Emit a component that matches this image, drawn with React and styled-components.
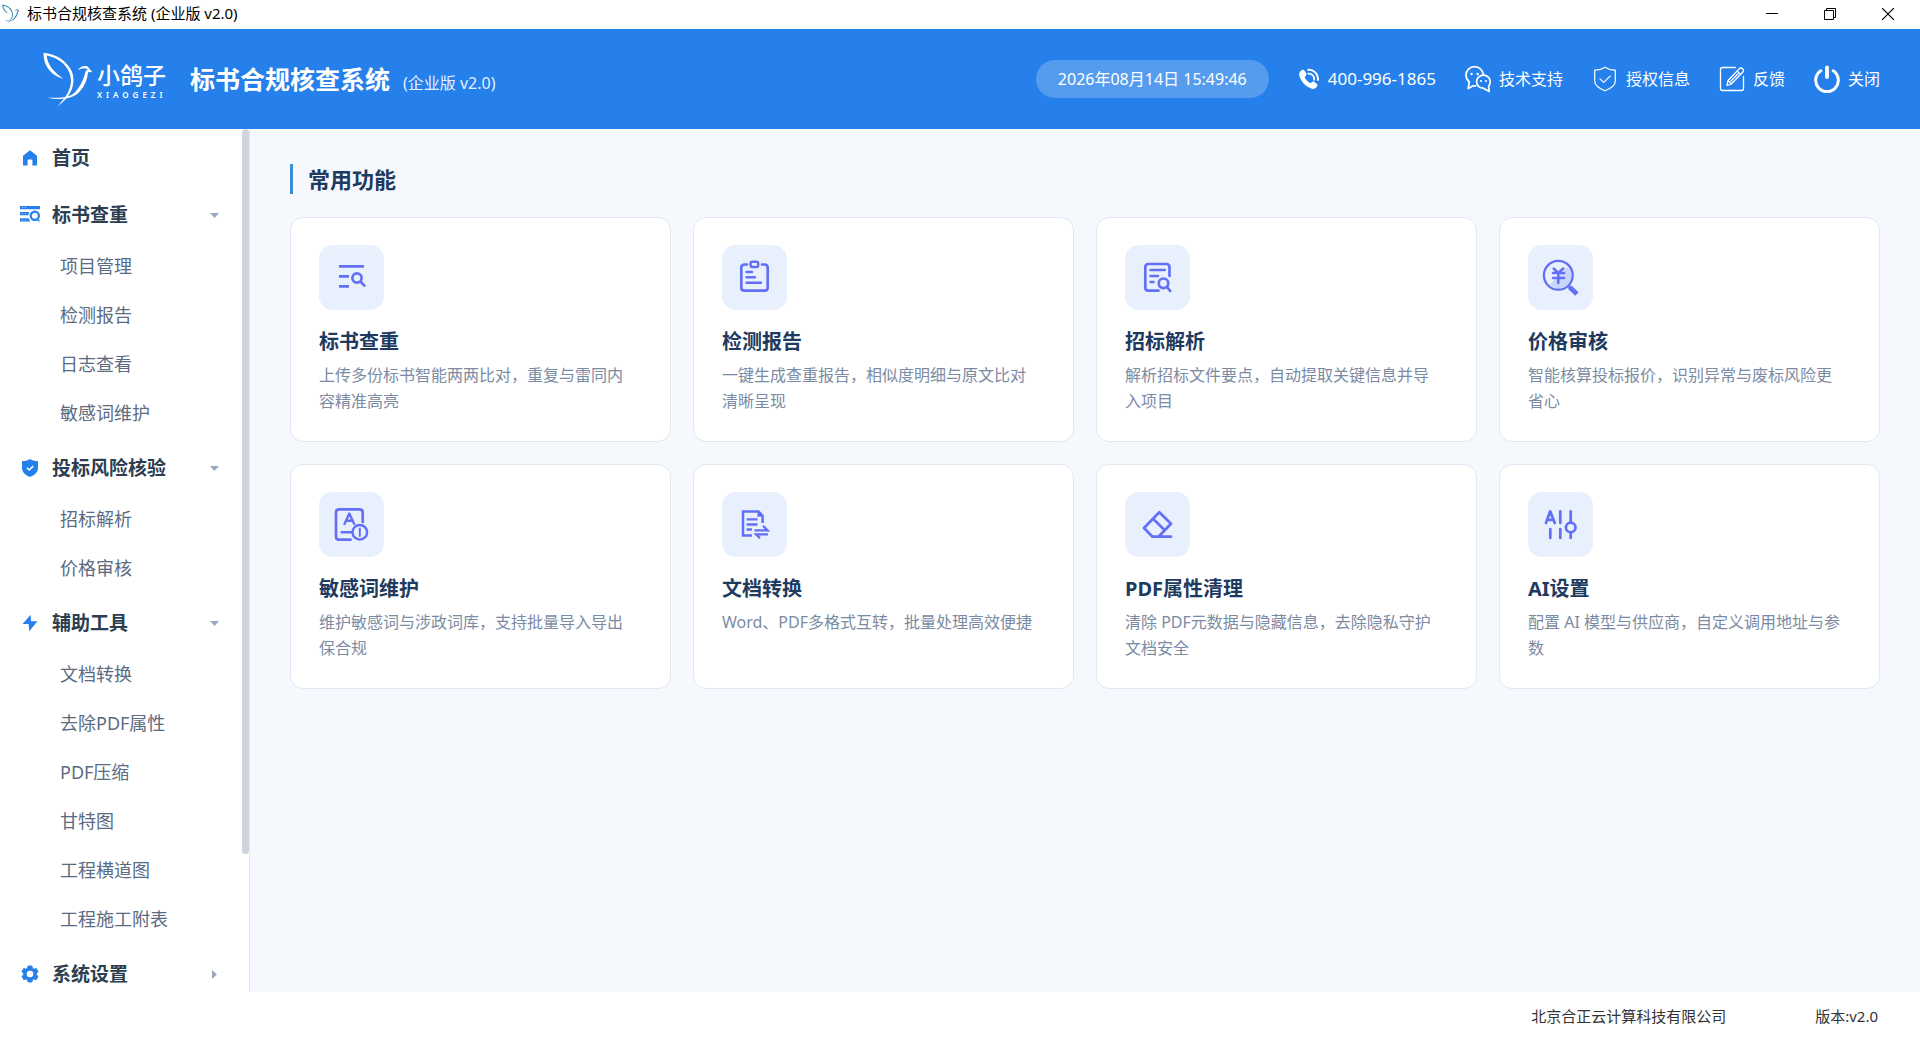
import { useState } from "react";
import styled, { createGlobalStyle } from "styled-components";

const GlobalStyle = createGlobalStyle`
    * {
        box-sizing: border-box;
    }
    body {
        margin: 0;
        background: #fff;
        font-family: "Noto Sans", "Noto Sans CJK SC", sans-serif;
        font-size: 16px;
    }
    button {
        margin: 0;
        padding: 0;
        border: none;
        background: none;
        font: inherit;
        color: inherit;
        cursor: pointer;
    }
    a {
        color: inherit;
        text-decoration: none;
    }
    svg {
        display: block;
        flex: none;
    }
`;

const Window = styled.div`
    display: flex;
    flex-direction: column;
    height: 100vh;
`;

/* ---------- title bar ---------- */

const TitleBar = styled.div`
    display: flex;
    align-items: center;
    height: 29px;
    flex: none;
    padding: 0 3px 2px 2px;
    background: #fff;
    color: #000;
`;

const WindowTitle = styled.span`
    flex: 1;
    margin-left: 7px;
    font-size: 15px;
    line-height: 27px;
`;

const WindowButton = styled.button`
    display: flex;
    align-items: center;
    justify-content: center;
    width: 58px;
    height: 27px;
`;

/* ---------- header ---------- */

const Header = styled.header`
    display: flex;
    align-items: center;
    justify-content: space-between;
    height: 100px;
    flex: none;
    padding: 0 40px 0 43px;
    background: #2680eb;
    color: #fff;
`;

const Brand = styled.div`
    display: flex;
    align-items: center;
`;

const LogoText = styled.div`
    display: flex;
    flex-direction: column;
    width: 72px;
    margin: 4px 21px 0 4px;
    white-space: nowrap;
`;

const LogoName = styled.span`
    font-size: 23px;
    font-weight: 500;
    line-height: 28px;
`;

const LogoLatin = styled.span`
    font-size: 8px;
    font-weight: 600;
    line-height: 12px;
    letter-spacing: 4px;
`;

const AppTitle = styled.h1`
    display: flex;
    align-items: baseline;
    margin: 0;
    padding-top: 4px;
    font-size: 25px;
    font-weight: 700;
    line-height: 36px;
`;

const Edition = styled.span`
    margin-left: 13px;
    font-size: 16px;
    font-weight: 400;
    color: rgba(255, 255, 255, 0.9);
`;

const Tools = styled.div`
    display: flex;
    align-items: center;
    gap: 29px;
`;

const Clock = styled.time`
    padding: 0 22px;
    border-radius: 19px;
    background: rgba(255, 255, 255, 0.22);
    line-height: 38px;
`;

const Tool = styled.button`
    display: flex;
    align-items: center;
    gap: 8px;
    line-height: 26px;
`;

const Phone = styled.span`
    font-size: 17px;
`;

/* ---------- sidebar ---------- */

const Body = styled.div`
    display: flex;
    flex: 1;
    min-height: 0;
`;

const Sidebar = styled.aside`
    display: flex;
    width: 250px;
    flex: none;
    border-right: 1px solid #e1e8f5;
    background: #fff;
`;

const Nav = styled.nav`
    display: flex;
    flex-direction: column;
    gap: 3px;
    flex: 1;
    padding: 2px 0 26px;
    overflow-y: auto;
    scrollbar-width: none;
`;

const Thumb = styled.div`
    width: 7px;
    height: 84%;
    border-radius: 4px;
    background: #cfd4de;
`;

const Group = styled.section`
    flex: none;
`;

const GroupButton = styled.button`
    display: flex;
    align-items: center;
    gap: 12px;
    width: 100%;
    height: 54px;
    padding: 0 21px 0 20px;
    color: #2c3e50;
    font-size: 19px;
    font-weight: 700;
    line-height: 28px;
`;

const GroupLabel = styled.span`
    flex: 1;
    text-align: left;
`;

const SubList = styled.ul`
    margin: 0;
    padding: 0;
    list-style: none;
`;

const SubLink = styled.a`
    display: block;
    padding-left: 60px;
    color: #5a6b82;
    font-size: 18px;
    line-height: 49px;
`;

/* ---------- content ---------- */

const Main = styled.main`
    flex: 1;
    padding: 35px 40px;
    background: #f5f9fe;
    overflow: auto;
`;

const SectionTitle = styled.h2`
    margin: 0 0 23px;
    padding-left: 15px;
    border-left: 3px solid #3b8fd6;
    color: #1e3a5f;
    font-size: 22px;
    font-weight: 700;
    line-height: 30px;
`;

const Cards = styled.div`
    display: grid;
    grid-template-columns: repeat(4, 1fr);
    gap: 22px;
`;

const Card = styled.a`
    padding: 27px 33px 27px 28px;
    border: 1px solid #e1e8f1;
    border-radius: 13px;
    background: #fff;
`;

const CardIcon = styled.div`
    width: 65px;
    height: 65px;
    border-radius: 14px;
    background: #e8f0fe;
    color: #6370f6;
`;

const CardTitle = styled.h3`
    margin: 18px 0 6px;
    color: #1e3a5f;
    font-size: 20px;
    font-weight: 700;
    line-height: 28px;
`;

const CardText = styled.p`
    margin: 0;
    color: #7b8ba3;
    font-size: 16px;
    line-height: 26px;
`;

const Footer = styled.footer`
    display: flex;
    align-items: center;
    justify-content: flex-end;
    gap: 89px;
    height: 49px;
    flex: none;
    padding: 0 42px 2px;
    background: #fff;
    color: #333;
    font-size: 15px;
    line-height: 20px;
`;

/* ---------- drawings ---------- */

const Bird = ({ width, height, color }) => (
    <svg width={width} height={height} viewBox="130 152 152 171" fill={color} aria-hidden="true">
        <path d="M131 157C170 160 206 183 219 218C227 243 222 269 205 292C197 302 188 311 175 321C186 306 197 296 204 282C217 258 218 240 210 218C199 191 173 172 141 166C143 194 162 216 192 237C157 227 131 201 131 157Z" />
        <path d="M236 211C243 199 256 195 266 199L280 216L267 217C266 241 252 270 232 285C210 300 175 302 143 295C172 295 205 297 224 281C241 266 253 241 258 220C259 212 263 210 267 209C259 202 249 203 236 211Z" />
    </svg>
);

const PhoneIcon = () => (
    <svg width="22" height="22" viewBox="0 0 22 22" fill="#fff">
        <path d="M3.6 2.2C4.6 1.4 5.9 1.6 6.6 2.7L8.2 5.3C8.7 6.2 8.5 7.1 7.8 7.8L6.6 9C7.5 11.6 9.6 13.8 12.4 15.2L13.7 14.2C14.5 13.5 15.4 13.4 16.3 14L18.6 15.6C19.6 16.4 19.8 17.6 19 18.6C17.7 20.5 15.6 21.4 13.2 20.6C7.5 18.7 2.3 12.8 1.2 7.1C.8 5 1.8 3.3 3.6 2.2Z" />
        <path d="M10 1.8C15.5 1.2 20.3 5.7 20 12M10.2 5.6C13.7 5.4 16.4 8 16.2 11.8" fill="none" stroke="#fff" strokeWidth="1.8" strokeLinecap="round" />
    </svg>
);

const WechatIcon = () => (
    <svg width="26" height="28" viewBox="0 0 26 28" fill="none" stroke="#fff" strokeWidth="1.7" strokeLinejoin="round">
        <path d="M18.6 9.8C18 5.3 14.3 1.6 9.6 1.6C4.8 1.6 1 5.4 1 10.1C1 13 2.3 15.4 4.2 17L3.2 23.6L8.2 20.8L11.3 21" />
        <path d="M18.5 10.2C14.5 10.2 11.6 13 11.6 16.7C11.6 20.5 14.5 23.2 18.4 23.2L24.2 26.4L23.6 21.4C24.6 20 25.2 18.5 25.2 16.7C25.2 13 22.3 10.2 18.5 10.2Z" />
        <g fill="#fff" stroke="none">
            <circle cx="6.5" cy="9" r="1.2" />
            <circle cx="12.6" cy="9" r="1.2" />
            <circle cx="16" cy="16" r="1.1" />
            <circle cx="21" cy="16" r="1.1" />
        </g>
    </svg>
);

const LicenseIcon = () => (
    <svg width="26" height="26" viewBox="0 0 26 26" fill="none" stroke="#fff" strokeWidth="1.2" strokeLinejoin="round">
        <path d="M13 1.2C16 3.2 19.5 4.3 23.3 4.2V15C23.3 19.5 19 22.4 13 24.8C7 22.4 2.7 19.5 2.7 15V4.2C6.5 4.3 10 3.2 13 1.2Z" />
        <path d="M7.6 12.6L11.7 16.4L18.6 9.6" />
    </svg>
);

const FeedbackIcon = () => (
    <svg width="26" height="26" viewBox="0 0 26 26" fill="none" stroke="#fff" strokeWidth="1.3" strokeLinejoin="round" strokeLinecap="round">
        <path d="M16.5 1.5H3.5C2.2 1.5 1.5 2.2 1.5 3.5V22.5C1.5 23.8 2.2 24.5 3.5 24.5H22.5C23.8 24.5 24.5 23.8 24.5 22.5V10.5" />
        <path d="M8 19.5L9 14.5L20.4 2.6C22.5 .8 25.6 3.8 23.9 6L12.5 17.8L8 19.5ZM9.2 14.6L12.4 17.7M18 5L21.6 8.4M12 15L19 7.8" />
    </svg>
);

const PowerIcon = () => (
    <svg width="26" height="28" viewBox="0 0 26 28" fill="none" stroke="#fff">
        <path d="M6.8 5.8A11.3 11.3 0 1 0 19.2 5.8" strokeWidth="3" strokeLinecap="round" />
        <path d="M13 2.3V12" strokeWidth="3.8" strokeLinecap="round" />
    </svg>
);

const NavIcon = ({ children }) => (
    <svg width="20" height="20" viewBox="0 0 20 20" fill="#2680eb" aria-hidden="true">
        {children}
    </svg>
);

const homeIcon = <path d="M10 2.2L17 7.8V17.5H12.4V12.2C12.4 11.7 12 11.4 11.6 11.4H8.4C8 11.4 7.6 11.7 7.6 12.2V17.5H3V7.8Z" />;

const checkIcon = (
    <>
        <path d="M0 1H20V4.2H0ZM0 7H9.6A6 6 0 0 0 8.3 10.2H0ZM0 13.3H8.7A6 6 0 0 0 10.5 16.5H0Z" />
        <path d="M2 2.1H3V3.1H2ZM5 2.1H6V3.1H5ZM2 8.1H3V9.1H2ZM5 8.1H6V9.1H5ZM2 14.4H3V15.4H2ZM5 14.4H6V15.4H5Z" fill="#fff" fillOpacity="0.7" />
        <circle cx="14.8" cy="10.8" r="4.1" fill="none" stroke="#2680eb" strokeWidth="2.2" />
        <path d="M16.2 14.4H19.4V17.3Z" />
    </>
);

const riskIcon = (
    <>
        <path d="M10 1C12.7 2.6 15.2 3.2 18 3.2V10C18 14.3 14.5 17.2 10 19C5.5 17.2 2 14.3 2 10V3.2C4.8 3.2 7.3 2.6 10 1Z" />
        <path d="M7 9.8L9.3 12L13.2 8.1" fill="none" stroke="#fff" strokeWidth="1.5" />
    </>
);

const boltIcon = <path d="M10.6 1.8L2.6 11H8.6L9.3 18.2L17.4 8.2H11Z" />;

const gearIcon = (
    <>
        <path
            d="M8.2 2H11.8L12.4 4.3L14 5.2L16.3 4.6L18 7.7L16.4 9.3V10.9L18 12.4L16.3 15.5L14 14.9L12.4 15.8L11.8 18H8.2L7.6 15.8L6 14.9L3.7 15.5L2 12.4L3.6 10.9V9.3L2 7.7L3.7 4.6L6 5.2L7.6 4.3Z"
            stroke="#2680eb"
            strokeLinejoin="round"
        />
        <circle cx="10" cy="10" r="3.3" fill="#fff" />
    </>
);

const Caret = ({ open }) => (
    <svg width="13" height="13" viewBox="0 0 13 13" fill="#9aa8bd" aria-hidden="true">
        <path d={open ? "M2 4H11L6.5 9Z" : "M4 2V11L9 6.5Z"} />
    </svg>
);

const FeatureIcon = ({ children }) => (
    <svg width="65" height="65" viewBox="0 0 65 65" fill="none" stroke="currentColor" strokeWidth="2.7" strokeLinecap="round" strokeLinejoin="round" aria-hidden="true">
        {children}
    </svg>
);

const compareDrawing = (
    <g strokeLinecap="butt">
        <path d="M20 21.3H45M20 31.3H30M20 41.3H30M41.5 36.5L46 41.3" />
        <circle cx="38" cy="33" r="4.6" />
    </g>
);

const reportDrawing = (
    <>
        <path d="M25 19.5H22.5Q19.3 19.5 19.3 22.7V42.5Q19.3 45.7 22.5 45.7H42.5Q45.7 45.7 45.7 42.5V22.7Q45.7 19.5 42.5 19.5H40" />
        <rect x="28.6" y="16.8" width="7.6" height="5.2" rx="1.5" strokeWidth="2.4" />
        <path d="M24.5 27H30M24.5 32.3H33M24.5 37.7H39" strokeWidth="2.4" />
    </>
);

const parseDrawing = (
    <>
        <path d="M44.5 31V22.2Q44.5 19 41.3 19H23.5Q20.3 19 20.3 22.2V42.5Q20.3 45.7 23.5 45.7H33.5" />
        <path d="M25.5 25H39.8M25.5 31H33M25.5 37H28.5" strokeWidth="2.5" />
        <circle cx="38.5" cy="38.3" r="4.8" />
        <path d="M42 42L45.2 46" />
    </>
);

const priceDrawing = (
    <>
        <path d="M39.5 22A11.8 11.8 0 1 1 22 39.5Z" fill="#c9d4fb" stroke="none" />
        <circle cx="30.3" cy="30.3" r="14.4" strokeWidth="2.3" />
        <path d="M25.6 23.5L30.3 28L35.3 23.5M30.3 28V38M25 28H36M25 33H36" strokeWidth="2.5" />
        <path d="M40.5 41L43 43.3" />
        <path d="M43.4 43.8L47.2 47.3" strokeWidth="4.8" strokeLinecap="square" />
    </>
);

const wordsDrawing = (
    <>
        <path d="M43.7 30V20.5Q43.7 17.3 40.5 17.3H20.2Q17 17.3 17 20.5V44.5Q17 47.7 20.2 47.7H31.5" />
        <path d="M25.5 32L30.3 21.5L35.2 32M27.3 28.7H33.3M22.5 40.3H32" strokeWidth="2.4" />
        <circle cx="40.8" cy="40.3" r="7.3" strokeWidth="2.4" />
        <path d="M40.8 36.5V44" strokeWidth="2" />
    </>
);

const convertDrawing = (
    <g strokeLinecap="butt" strokeLinejoin="miter">
        <path d="M30 43.5H21V19.5H36.5L40.6 23.8V31" strokeWidth="2.5" />
        <path d="M35.5 18.5V24.8H41.5Z" fill="currentColor" stroke="none" />
        <path d="M24.6 27.3H35.5M24.6 32.5H35.5M24.6 37.5H30M32.5 38.3H45.5L41 33.8M46 42.3H34L38 46.3" strokeWidth="2.3" />
    </g>
);

const eraserDrawing = (
    <path d="M34.3 20.3L46 31.7L33.5 44.7H27.5L19 36ZM28.3 27L39.8 38.3M33.5 44.7H46" />
);

const aiDrawing = (
    <>
        <path d="M18 31L22.2 19.3L26.8 31M19.5 27.8H25M32.3 19.3V31M42.7 19.3V30M22.3 37V46M32.3 37V46M42.7 41V46" />
        <circle cx="42.7" cy="35.5" r="4.8" />
    </>
);

/* ---------- data ---------- */

const groups = [
    { label: "首页", icon: homeIcon },
    { label: "标书查重", icon: checkIcon, open: true, items: ["项目管理", "检测报告", "日志查看", "敏感词维护"] },
    { label: "投标风险核验", icon: riskIcon, open: true, items: ["招标解析", "价格审核"] },
    {
        label: "辅助工具",
        icon: boltIcon,
        open: true,
        items: ["文档转换", "去除PDF属性", "PDF压缩", "甘特图", "工程横道图", "工程施工附表"],
    },
    { label: "系统设置", icon: gearIcon, items: [] },
];

const features = [
    { title: "标书查重", text: "上传多份标书智能两两比对，重复与雷同内容精准高亮", drawing: compareDrawing },
    { title: "检测报告", text: "一键生成查重报告，相似度明细与原文比对清晰呈现", drawing: reportDrawing },
    { title: "招标解析", text: "解析招标文件要点，自动提取关键信息并导入项目", drawing: parseDrawing },
    { title: "价格审核", text: "智能核算投标报价，识别异常与废标风险更省心", drawing: priceDrawing },
    { title: "敏感词维护", text: "维护敏感词与涉政词库，支持批量导入导出保合规", drawing: wordsDrawing },
    { title: "文档转换", text: "Word、PDF多格式互转，批量处理高效便捷", drawing: convertDrawing },
    { title: "PDF属性清理", text: "清除 PDF元数据与隐藏信息，去除隐私守护文档安全", drawing: eraserDrawing },
    { title: "AI设置", text: "配置 AI 模型与供应商，自定义调用地址与参数", drawing: aiDrawing },
];

const NavGroup = ({ label, icon, items, open: initiallyOpen }) => {
    const [open, setOpen] = useState(Boolean(initiallyOpen));

    return (
        <Group>
            <GroupButton type="button" aria-expanded={items ? open : undefined} onClick={() => setOpen(!open)}>
                <NavIcon>{icon}</NavIcon>
                <GroupLabel>{label}</GroupLabel>
                {items && <Caret open={open} />}
            </GroupButton>
            {open && items && (
                <SubList>
                    {items.map((item) => (
                        <li key={item}>
                            <SubLink href="#">{item}</SubLink>
                        </li>
                    ))}
                </SubList>
            )}
        </Group>
    );
};

const App = () => {
    return (
        <Window>
            <GlobalStyle />
            <TitleBar>
                <Bird width={18} height={20} color="#3a86b4" />
                <WindowTitle>标书合规核查系统 (企业版 v2.0)</WindowTitle>
                <WindowButton type="button" aria-label="最小化">
                    <svg width="12" height="12" viewBox="0 0 12 12" stroke="#000">
                        <path d="M0 5.5H12" />
                    </svg>
                </WindowButton>
                <WindowButton type="button" aria-label="还原">
                    <svg width="12" height="12" viewBox="0 0 12 12" fill="none" stroke="#000">
                        <path d="M.5 2.5H9.5V11.5H.5ZM2.5 2.5V.5H11.5V9.5H9.5" />
                    </svg>
                </WindowButton>
                <WindowButton type="button" aria-label="关闭窗口">
                    <svg width="12" height="12" viewBox="0 0 12 12" stroke="#000" strokeWidth="1.2">
                        <path d="M0 0L12 12M12 0L0 12" />
                    </svg>
                </WindowButton>
            </TitleBar>

            <Header>
                <Brand>
                    <Bird width={50} height={56} color="#fff" />
                    <LogoText>
                        <LogoName>小鸽子</LogoName>
                        <LogoLatin>XIAOGEZI</LogoLatin>
                    </LogoText>
                    <AppTitle>
                        标书合规核查系统
                        <Edition>(企业版 v2.0)</Edition>
                    </AppTitle>
                </Brand>
                <Tools>
                    <Clock dateTime="2026-08-14T15:49:46">2026年08月14日 15:49:46</Clock>
                    <Tool type="button">
                        <PhoneIcon />
                        <Phone>400-996-1865</Phone>
                    </Tool>
                    <Tool type="button">
                        <WechatIcon />
                        技术支持
                    </Tool>
                    <Tool type="button">
                        <LicenseIcon />
                        授权信息
                    </Tool>
                    <Tool type="button">
                        <FeedbackIcon />
                        反馈
                    </Tool>
                    <Tool type="button">
                        <PowerIcon />
                        关闭
                    </Tool>
                </Tools>
            </Header>

            <Body>
                <Sidebar>
                    <Nav>
                        {groups.map((group) => (
                            <NavGroup key={group.label} {...group} />
                        ))}
                    </Nav>
                    <Thumb />
                </Sidebar>
                <Main>
                    <SectionTitle>常用功能</SectionTitle>
                    <Cards>
                        {features.map(({ title, text, drawing }) => (
                            <Card key={title} href="#">
                                <CardIcon>
                                    <FeatureIcon>{drawing}</FeatureIcon>
                                </CardIcon>
                                <CardTitle>{title}</CardTitle>
                                <CardText>{text}</CardText>
                            </Card>
                        ))}
                    </Cards>
                </Main>
            </Body>

            <Footer>
                <span>北京合正云计算科技有限公司</span>
                <span>版本:v2.0</span>
            </Footer>
        </Window>
    );
};

export default App;
